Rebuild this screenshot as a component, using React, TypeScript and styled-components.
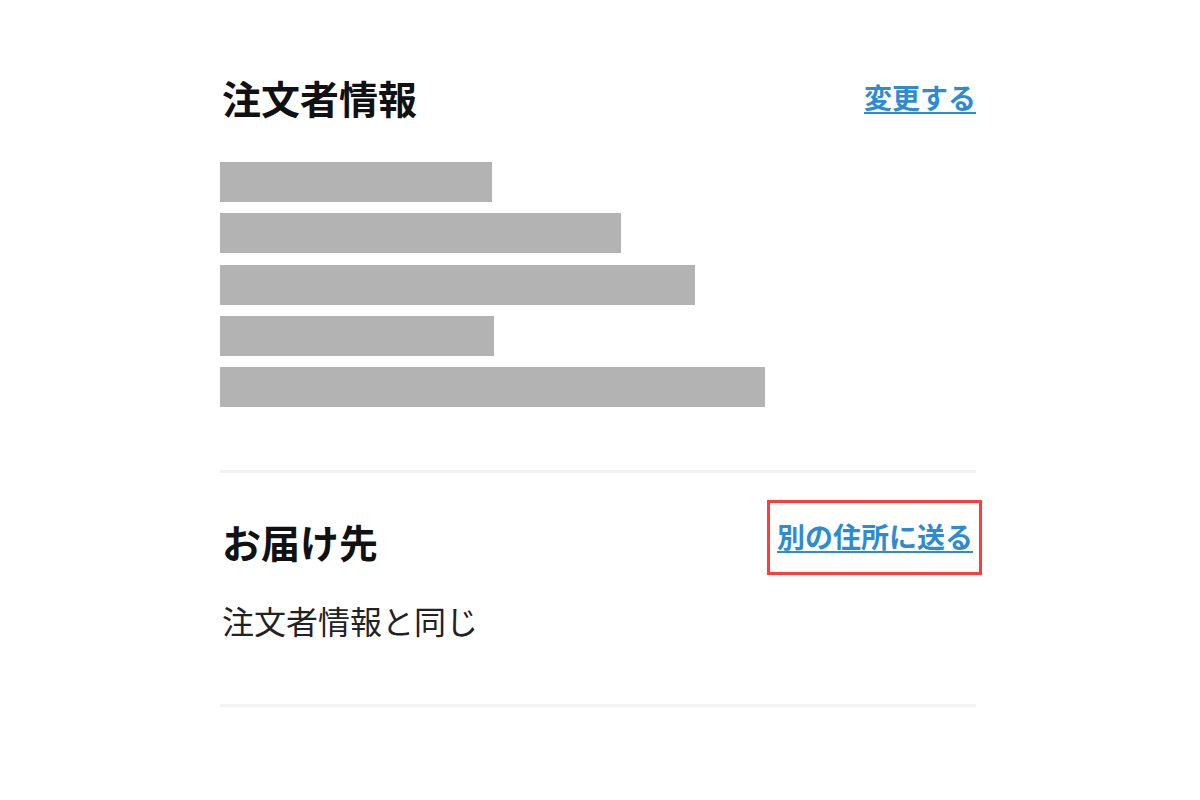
import React from 'react'
import styled, { createGlobalStyle } from 'styled-components'

const GlobalStyle = createGlobalStyle`
  html, body {
    margin: 0;
    padding: 0;
    background: #fff;
  }
  body {
    font-family: "Noto Sans CJK JP", "Noto Sans", sans-serif;
    color: #111;
  }
`

const Page = styled.div`
  width: 756px;
  margin: 0 0 0 220px;
  padding-top: 69px;
`

const Section = styled.section<{ $pad: string }>`
  padding: ${({ $pad }) => $pad};
  border-bottom: 3px solid #f2f2f2;
`

const Header = styled.div<{ $height: number }>`
  display: flex;
  justify-content: space-between;
  align-items: center;
  height: ${({ $height }) => $height}px;
`

const Title = styled.h2<{ $shift?: number }>`
  margin: ${({ $shift }) => $shift || 0}px 0 0 2px;
  font-size: 39px;
  font-weight: 700;
  line-height: 1;
  color: #111;
`

const LinkText = styled.a`
  font-size: 28px;
  font-weight: 700;
  line-height: 1;
  color: #2d8cd1;
  text-decoration: underline;
  text-underline-offset: 3px;
  text-decoration-thickness: 2px;
  cursor: pointer;
`

const Highlight = styled.div`
  display: flex;
  align-items: center;
  height: 75px;
  box-sizing: border-box;
  padding: 0 6px 3px 7px;
  margin-right: -6px;
  border: 3px solid #ff3b3b;
`

const Bars = styled.div`
  display: flex;
  flex-direction: column;
  gap: 11.25px;
  margin-top: 37px;
`

const Bar = styled.div<{ $w: number }>`
  width: ${({ $w }) => $w}px;
  height: 40px;
  background: #b3b3b3;
`

const Body = styled.p`
  margin: 29px 0 0 2px;
  font-size: 32px;
  font-weight: 400;
  line-height: 1;
  color: #222;
`

const barWidths = [272, 401, 475, 274, 545]

export default function App() {
  return (
    <>
      <GlobalStyle />
      <Page>
        <Section $pad="0 0 63px 0">
          <Header $height={56}>
            <Title>注文者情報</Title>
            <LinkText>変更する</LinkText>
          </Header>
          <Bars>
            {barWidths.map((w, i) => (
              <Bar key={i} $w={w} />
            ))}
          </Bars>
        </Section>
        <Section $pad="27px 0 68px 0">
          <Header $height={75}>
            <Title $shift={7}>お届け先</Title>
            <Highlight>
              <LinkText>別の住所に送る</LinkText>
            </Highlight>
          </Header>
          <Body>注文者情報と同じ</Body>
        </Section>
      </Page>
    </>
  )
}
